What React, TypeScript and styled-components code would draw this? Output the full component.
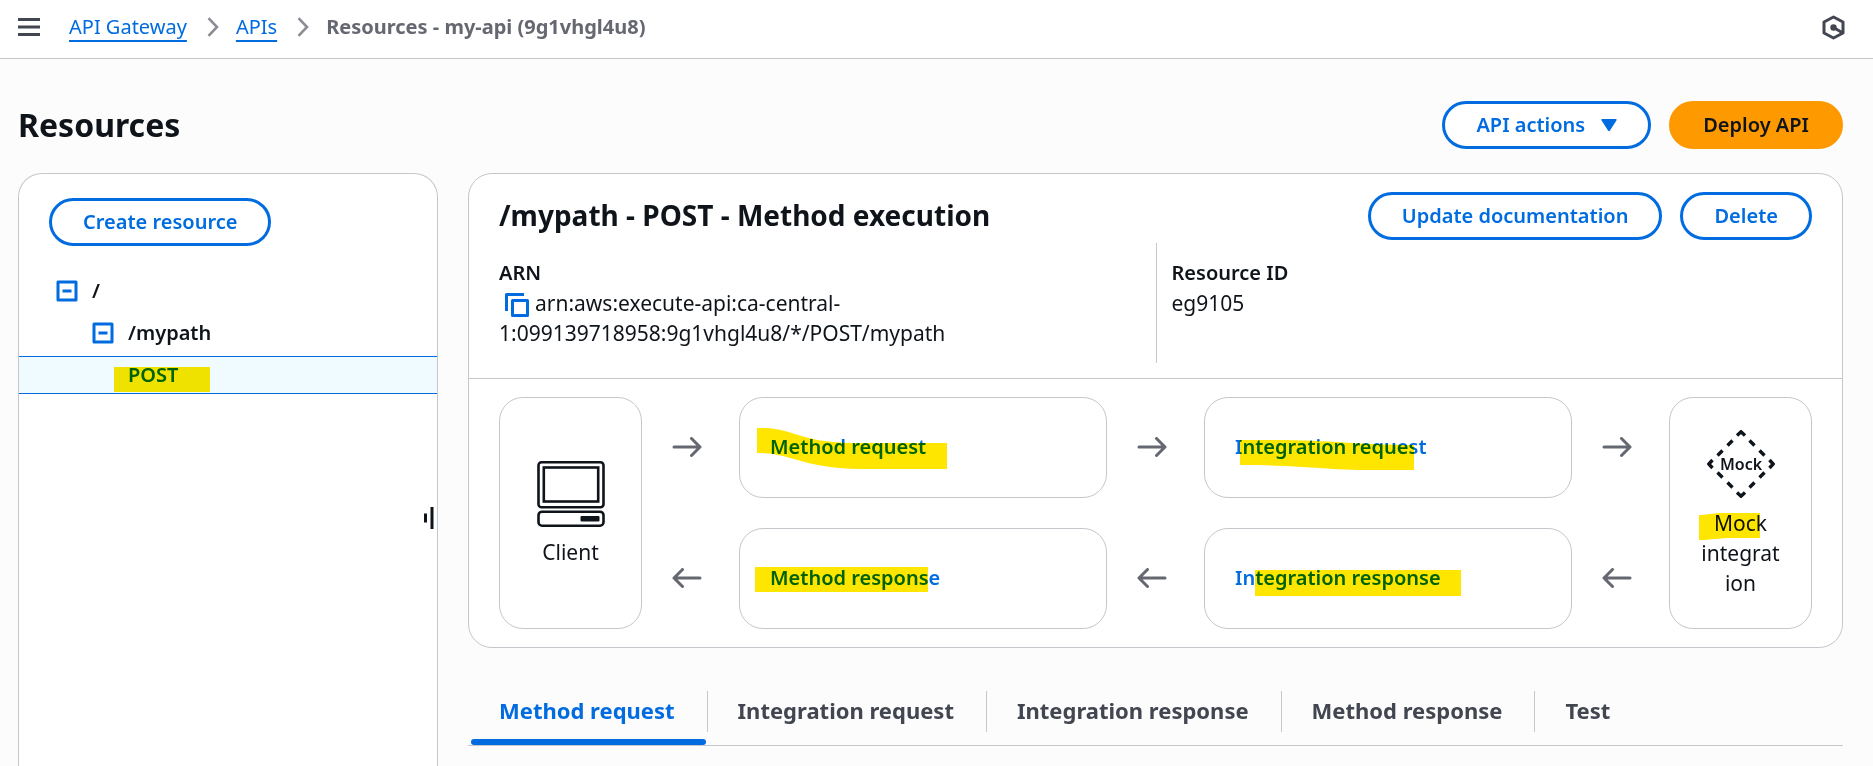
import React from "react";
import styled, { createGlobalStyle, css } from "styled-components";

const color = {
  blue: "#006ce0",
  ink: "#0f141a",
  muted: "#656871",
  slate: "#424650",
  line: "#c6c6cd",
  page: "#fcfcfd",
  marker: "#ffe600",
  orange: "#ff9900",
  selected: "#f0fbff",
};

const GlobalStyle = createGlobalStyle`
  *, *::before, *::after { box-sizing: border-box; }
  body {
    margin: 0;
    background: ${color.page};
    color: ${color.ink};
    font-family: "Noto Sans", "Open Sans", sans-serif;
    font-size: 20px;
    line-height: 30px;
  }
  h1, h2, dl, dd, ul, ol { margin: 0; padding: 0; }
  ul, ol { list-style: none; }
  svg { display: block; flex: none; }
`;

const Page = styled.div`
  display: flex;
  flex-direction: column;
  height: 100vh;
  overflow: hidden;
`;

const TopBar = styled.header`
  display: flex;
  flex: none;
  align-items: center;
  height: 59px;
  padding: 0 28px 4px 18px;
  background: #fff;
  border-bottom: 1px solid ${color.line};
`;

const IconButton = styled.button`
  display: inline-flex;
  padding: 0;
  border: 0;
  background: none;
  color: ${color.slate};
  cursor: pointer;
`;

const Breadcrumbs = styled.nav`
  flex: 1;
  margin-left: 29px;
`;

const CrumbList = styled.ol`
  display: flex;
  align-items: center;
`;

const Crumb = styled.li`
  display: flex;
  align-items: center;
  color: ${color.muted};

  & > svg { margin: 0 17px 0 20px; }
`;

const CrumbLink = styled.a`
  color: ${color.blue};
  text-decoration: underline;
  text-decoration-thickness: 2px;
  text-underline-offset: 6px;
`;

const CrumbCurrent = styled.span`
  font-weight: 700;
`;

const Main = styled.main`
  display: flex;
  flex: 1;
  flex-direction: column;
  min-height: 0;
  padding: 42px 30px 0 18px;
`;

const TitleRow = styled.div`
  display: flex;
  align-items: center;
  justify-content: space-between;
  margin-bottom: 24px;
`;

const PageTitle = styled.h1`
  font-size: 32px;
  line-height: 42px;
  font-weight: 700;
`;

const Actions = styled.div`
  display: flex;
  gap: 18px;
`;

const Button = styled.button<{ $primary?: boolean }>`
  display: inline-flex;
  align-items: center;
  gap: 16px;
  height: 48px;
  padding: 0 31px;
  border: 3px solid ${(p) => (p.$primary ? color.orange : color.blue)};
  border-radius: 24px;
  background: ${(p) => (p.$primary ? color.orange : "#fff")};
  color: ${(p) => (p.$primary ? color.ink : color.blue)};
  font: 600 20px/30px "Noto Sans", "Open Sans", sans-serif;
  white-space: nowrap;
  cursor: pointer;
`;

const Columns = styled.div`
  display: flex;
  flex: 1;
  gap: 30px;
  min-height: 0;
`;

const SidePanel = styled.aside`
  position: relative;
  flex: none;
  width: 420px;
  padding-top: 24px;
  background: #fff;
  border: 1px solid ${color.line};
  border-bottom: 0;
  border-radius: 24px 24px 0 0;
`;

const SideActions = styled.div`
  padding: 0 30px;
`;

const Tree = styled.ul`
  display: flex;
  flex-direction: column;
  gap: 4px;
  margin-top: 26px;
`;

const TreeRow = styled.li<{ $level: number; $selected?: boolean }>`
  position: relative;
  display: flex;
  align-items: center;
  gap: 14px;
  height: 38px;
  padding-left: ${(p) => 37 + p.$level * 36}px;
  font-weight: 600;
  ${(p) =>
    p.$selected &&
    css`
      background: ${color.selected};
      box-shadow: inset 0 1px ${color.blue}, inset 0 -1px ${color.blue};
    `}
`;

const TreeToggle = styled(IconButton)`
  color: ${color.blue};
`;

const Link = styled.a`
  color: ${color.blue};
  font-weight: 600;
  text-decoration: none;
`;

const ResizeHandle = styled.button`
  position: absolute;
  top: 333px;
  right: 3px;
  display: flex;
  padding: 0;
  border: 0;
  background: none;
  color: ${color.ink};
  cursor: col-resize;
`;

/* Marker strokes multiply with whatever text lies beneath them. */
const Marker = styled.svg<{ $x: number; $y: number }>`
  position: absolute;
  left: ${(p) => p.$x}px;
  top: ${(p) => p.$y}px;
  fill: ${color.marker};
  mix-blend-mode: multiply;
  pointer-events: none;
`;

const Content = styled.div`
  flex: 1;
  min-width: 0;
`;

const Card = styled.section`
  background: #fff;
  border: 1px solid ${color.line};
  border-radius: 24px;
`;

const CardHeader = styled.div`
  display: flex;
  align-items: center;
  justify-content: space-between;
  padding: 18px 30px 3px;
`;

const CardTitle = styled.h2`
  padding-bottom: 2px;
  font-size: 28px;
  line-height: 36px;
  font-weight: 700;
`;

const Details = styled.dl`
  display: grid;
  grid-template-columns: 1fr 1fr;
  padding: 0 30px 15px;
  border-bottom: 1px solid ${color.line};
`;

const Detail = styled.div`
  padding: 15px 15px 15px 0;

  & + & {
    padding-left: 15px;
    border-left: 1px solid ${color.line};
  }
`;

const DetailLabel = styled.dt`
  font-weight: 600;
`;

const DetailValue = styled.dd`
  font-size: 21px;
`;

const CopyButton = styled(IconButton)`
  margin: 0 6px;
  color: ${color.blue};
  vertical-align: middle;
`;

const Flow = styled.div`
  display: flex;
  padding: 18px 30px;
`;

const Endpoint = styled.div`
  position: relative;
  display: flex;
  flex: none;
  flex-direction: column;
  align-items: center;
  justify-content: center;
  gap: 10px;
  width: 143px;
  padding: 2px 30px 0;
  border: 1px solid ${color.line};
  border-radius: 24px;
  font-size: 21px;
  text-align: center;
`;

const EndpointLabel = styled.div`
  width: 100%;
  overflow-wrap: anywhere;
`;

const Lane = styled.div`
  display: flex;
  flex: 1;
  flex-direction: column;
  gap: 30px;
`;

const Step = styled.div`
  position: relative;
  display: flex;
  align-items: center;
  height: 101px;
  padding: 0 0 2px 30px;
  border: 1px solid ${color.line};
  border-radius: 24px;
`;

const ArrowLane = styled.div`
  display: flex;
  flex: none;
  flex-direction: column;
  gap: 30px;
  width: 97px;
`;

const ArrowCell = styled.div`
  display: flex;
  align-items: center;
  justify-content: center;
  height: 101px;
  padding: 0 7px 2px 0;
  color: ${color.muted};
`;

const TabBar = styled.div`
  display: flex;
  margin-top: 36px;
  border-bottom: 1px solid ${color.line};
`;

const Tab = styled.button<{ $active?: boolean }>`
  position: relative;
  height: 61px;
  padding: 0 32px 10px 31px;
  border: 0;
  background: none;
  color: ${(p) => (p.$active ? color.blue : color.slate)};
  font: 700 22px/30px "Noto Sans", "Open Sans", sans-serif;
  white-space: nowrap;
  cursor: pointer;

  &:not(:first-child)::before {
    content: "";
    position: absolute;
    left: 0;
    top: 7px;
    height: 41px;
    border-left: 1px solid ${color.line};
  }

  ${(p) =>
    p.$active &&
    css`
      &::after {
        content: "";
        position: absolute;
        left: 3px;
        right: 1px;
        bottom: 0;
        height: 6px;
        border-radius: 3px;
        background: ${color.blue};
      }
    `}
`;

const MenuIcon = () => (
  <svg width="22" height="18" viewBox="0 0 22 18" fill="currentColor" aria-hidden="true">
    <path d="M0 0h22v3H0zM0 7.5h22v3H0zM0 15h22v3H0z" />
  </svg>
);

const ChevronIcon = () => (
  <svg width="12" height="20" viewBox="0 0 12 20" fill="none" stroke="#8c8c94" strokeWidth="2.6" aria-hidden="true">
    <path d="M1.5 1.2 10 10l-8.500 8.800" />
  </svg>
);

const AssistantIcon = () => (
  <svg width="23" height="25" viewBox="0 0 23 25" fill="none" stroke="currentColor" strokeWidth="3" strokeLinejoin="round" aria-hidden="true">
    <path d="M11.500 2 21 7v11l-9.500 5L2 18V7z" />
    <path d="m11.500 12.500 8.500 5" />
    <circle cx="11.500" cy="12.500" r="3.200" fill="currentColor" stroke="none" />
  </svg>
);

const CaretIcon = () => (
  <svg width="16" height="12" viewBox="0 0 16 12" fill="currentColor" aria-hidden="true">
    <path d="M1.500 0h13c1 0 1.500.900.900 1.600L9 11.400c-.5.700-1.500.700-2 0L.6 1.600C0 .900.500 0 1.500 0z" />
  </svg>
);

const CollapseIcon = () => (
  <svg width="22" height="22" viewBox="0 0 22 22" fill="none" stroke="currentColor" strokeWidth="3" strokeLinejoin="round" aria-hidden="true">
    <path d="M2 2h18v18H2zM6.500 11h9" />
  </svg>
);

const HandleIcon = () => (
  <svg width="10" height="22" viewBox="0 0 10 22" fill="currentColor" aria-hidden="true">
    <path d="M0 6.500h3v9H0zM6.500 0h3v22h-3z" />
  </svg>
);

const CopyIcon = () => (
  <svg width="24" height="24" viewBox="0 0 24 24" fill="none" stroke="currentColor" strokeWidth="3" strokeLinejoin="round" aria-hidden="true">
    <path d="M7.500 7.500h15v15h-15zM1.500 18V1.500H19" />
  </svg>
);

const ArrowIcon = ({ back }: { back?: boolean }) => (
  <svg width="30" height="20" viewBox="0 0 30 20" fill="none" stroke="currentColor" strokeWidth="3" strokeLinecap="round" strokeLinejoin="round" aria-hidden="true">
    {back ? <path d="M28 10H2M10.500 1.500 2 10l8.500 8.500" /> : <path d="M2 10h26M19.500 1.500 28 10l-8.500 8.500" />}
  </svg>
);

const ClientIcon = () => (
  <svg width="68" height="66" viewBox="0 0 68 66" fill="none" stroke={color.ink} strokeWidth="2.600" aria-hidden="true">
    <rect x="1.500" y="1.300" width="65" height="45" rx="3" />
    <rect x="6.800" y="6.500" width="54.400" height="34" />
    <rect x="1.500" y="50.700" width="65" height="14" rx="3.500" />
    <rect x="43.500" y="55" width="19" height="5.500" rx="1" fill={color.ink} stroke="none" />
  </svg>
);

const MockIcon = () => (
  <svg width="68" height="68" viewBox="0 0 68 68" fill="none" stroke={color.ink} strokeWidth="3.400" role="img" aria-label="Mock">
    <path d="M30 5.500 34 1.800l4 3.700M62.500 30l3.700 4-3.700 4M38 62.500 34 66.200l-4-3.700M5.500 38 1.800 34l3.700-4" />
    <path d="m25.500 10.500-5 5M15.500 20.500l-5 5M42.500 10.500l5 5M52.500 20.500l5 5M25.500 57.500l-5-5M15.500 47.500l-5-5M42.500 57.500l5-5M52.500 47.500l5-5" />
    <text x="34" y="40" textAnchor="middle" fontSize="16" fontWeight="600" fill={color.ink} stroke="none">
      Mock
    </text>
  </svg>
);

const Arrows = () => (
  <ArrowLane>
    <ArrowCell><ArrowIcon /></ArrowCell>
    <ArrowCell><ArrowIcon back /></ArrowCell>
  </ArrowLane>
);

const tabs = ["Method request", "Integration request", "Integration response", "Method response", "Test"];

export default function App() {
  return (
    <Page>
      <GlobalStyle />
      <TopBar>
        <IconButton type="button" aria-label="Open navigation"><MenuIcon /></IconButton>
        <Breadcrumbs aria-label="Breadcrumbs">
          <CrumbList>
            <Crumb><CrumbLink href="#gateway">API Gateway</CrumbLink><ChevronIcon /></Crumb>
            <Crumb><CrumbLink href="#apis">APIs</CrumbLink><ChevronIcon /></Crumb>
            <Crumb><CrumbCurrent aria-current="page">Resources - my-api (9g1vhgl4u8)</CrumbCurrent></Crumb>
          </CrumbList>
        </Breadcrumbs>
        <IconButton type="button" aria-label="Assistant"><AssistantIcon /></IconButton>
      </TopBar>

      <Main>
        <TitleRow>
          <PageTitle>Resources</PageTitle>
          <Actions>
            <Button type="button" aria-haspopup="menu">API actions<CaretIcon /></Button>
            <Button type="button" $primary>Deploy API</Button>
          </Actions>
        </TitleRow>

        <Columns>
          <SidePanel>
            <SideActions><Button type="button">Create resource</Button></SideActions>
            <Tree>
              <TreeRow $level={0}>
                <TreeToggle type="button" aria-label="Collapse /"><CollapseIcon /></TreeToggle>/
              </TreeRow>
              <TreeRow $level={1}>
                <TreeToggle type="button" aria-label="Collapse /mypath"><CollapseIcon /></TreeToggle>/mypath
              </TreeRow>
              <TreeRow $level={2} $selected>
                <Link href="#post">POST</Link>
                <Marker $x={95} $y={11} width="96" height="25"><path d="M0 0h96v25H0z" /></Marker>
              </TreeRow>
            </Tree>
            <ResizeHandle type="button" aria-label="Resize panel"><HandleIcon /></ResizeHandle>
          </SidePanel>

          <Content>
            <Card>
              <CardHeader>
                <CardTitle>/mypath - POST - Method execution</CardTitle>
                <Actions>
                  <Button type="button">Update documentation</Button>
                  <Button type="button">Delete</Button>
                </Actions>
              </CardHeader>
              <Details>
                <Detail>
                  <DetailLabel>ARN</DetailLabel>
                  <DetailValue>
                    <CopyButton type="button" aria-label="Copy ARN"><CopyIcon /></CopyButton>
                    arn:aws:execute-api:ca-central-1:099139718958:9g1vhgl4u8/*/POST/mypath
                  </DetailValue>
                </Detail>
                <Detail>
                  <DetailLabel>Resource ID</DetailLabel>
                  <DetailValue>eg9105</DetailValue>
                </Detail>
              </Details>
              <Flow>
                <Endpoint>
                  <ClientIcon />
                  <EndpointLabel>Client</EndpointLabel>
                </Endpoint>
                <Arrows />
                <Lane>
                  <Step>
                    <Link href="#method-request">Method request</Link>
                    <Marker $x={17} $y={30} width="190" height="41">
                      <path d="M0 0h8C38 1 42 14 95 15h95v26H103C48 41 34 25 0 25z" />
                    </Marker>
                  </Step>
                  <Step>
                    <Link href="#method-response">Method response</Link>
                    <Marker $x={15} $y={38} width="173" height="25"><path d="M0 0h173v25H0z" /></Marker>
                  </Step>
                </Lane>
                <Arrows />
                <Lane>
                  <Step>
                    <Link href="#integration-request">Integration request</Link>
                    <Marker $x={35} $y={42} width="174" height="30">
                      <path d="M0 0h35c55 0 85 5 139 5v25h-44C86 30 60 25 0 25z" />
                    </Marker>
                  </Step>
                  <Step>
                    <Link href="#integration-response">Integration response</Link>
                    <Marker $x={50} $y={41} width="206" height="26"><path d="M0 0h206v26H0z" /></Marker>
                  </Step>
                </Lane>
                <Arrows />
                <Endpoint>
                  <MockIcon />
                  <EndpointLabel>Mock integration</EndpointLabel>
                  <Marker $x={29} $y={115} width="61" height="27">
                    <path d="M0 2c8 0 14-2 24-2h37v25H34c-14 0-22 2-34 2z" />
                  </Marker>
                </Endpoint>
              </Flow>
            </Card>
            <TabBar role="tablist">
              {tabs.map((name, i) => (
                <Tab key={name} type="button" role="tab" aria-selected={i === 0} $active={i === 0}>
                  {name}
                </Tab>
              ))}
            </TabBar>
          </Content>
        </Columns>
      </Main>
    </Page>
  );
}
